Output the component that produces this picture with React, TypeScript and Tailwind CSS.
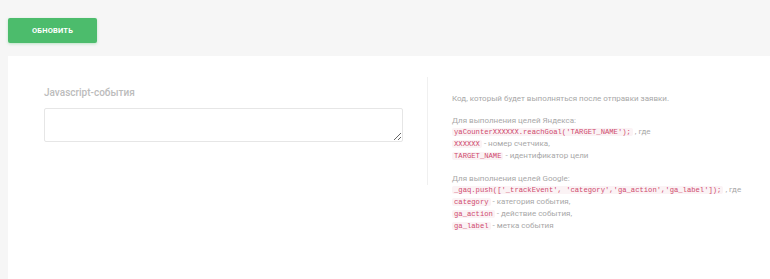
import React from "react";

function C({ children }: { children: React.ReactNode }) {
  return (
    <code className="rounded-[2px] bg-[#fbf3f5] px-[2px] font-['Liberation_Mono',monospace] text-[7.2px] text-[#cf4a6e]">
      {children}
    </code>
  );
}

export default function App() {
  return (
    <div className="min-h-[279px] bg-[#f6f6f6] pl-2 pt-[18px] font-['Roboto',sans-serif]">
      <button className="flex h-[25px] w-[89px] items-center justify-center rounded-[2px] bg-[#4cbc6c] text-[7.5px] font-bold uppercase tracking-[0.2px] text-white shadow-[0_1px_3px_rgba(76,188,108,0.35)]">
        Обновить
      </button>
      <div className="mt-[13px] flex h-[223px] bg-white">
        <div className="w-[419px] shrink-0 pl-9 pr-6 pt-[30px]">
          <div className="text-[10px] font-medium leading-[14px] text-[#bcbcbc]">
            Javascript-события
          </div>
          <textarea className="mt-[8px] block h-[34px] w-[359px] resize-y rounded-[2px] border border-[#e6e6e6] bg-white outline-none" />
        </div>
        <div className="mt-[21px] h-[108px] w-px shrink-0 bg-[#f0f0f0]" />
        <div className="pl-[24px] pt-[37px] text-[8px] leading-[11px] text-[#a8a8a8]">
          <div>Код, который будет выполняться после отправки заявки.</div>
          <div className="h-[11px]" />
          <div>Для выполнения целей Яндекса:</div>
          <div>
            <C>yaCounterXXXXXX.reachGoal('TARGET_NAME');</C> , где
          </div>
          <div>
            <C>XXXXXX</C> - номер счетчика,
          </div>
          <div>
            <C>TARGET_NAME</C> - идентификатор цели
          </div>
          <div className="h-[11px]" />
          <div>Для выполнения целей Google:</div>
          <div>
            <C>_gaq.push(['_trackEvent', 'category','ga_action','ga_label']);</C> , где
          </div>
          <div>
            <C>category</C> - категория события,
          </div>
          <div>
            <C>ga_action</C> - действие события,
          </div>
          <div>
            <C>ga_label</C> - метка события
          </div>
        </div>
      </div>
    </div>
  );
}
